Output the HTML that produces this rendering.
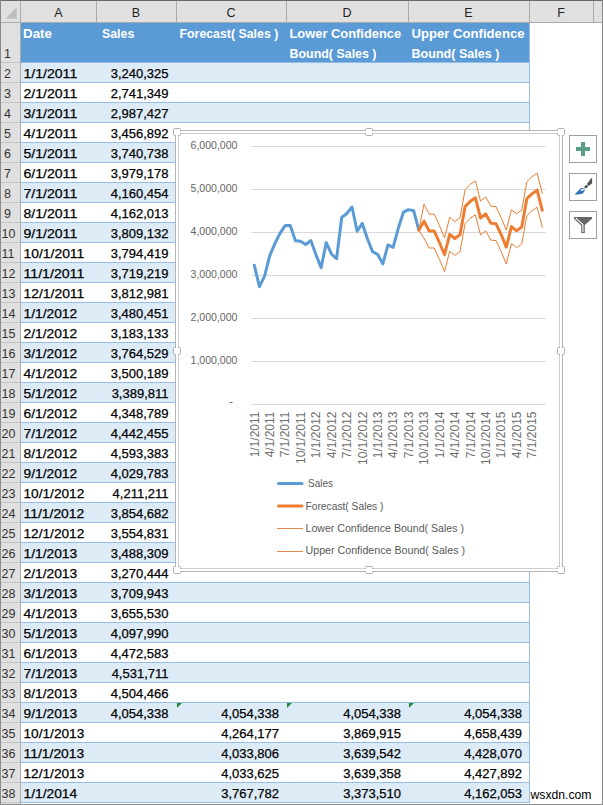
<!DOCTYPE html><html><head><meta charset="utf-8"><style>
*{margin:0;padding:0;box-sizing:border-box}
html,body{width:603px;height:805px;overflow:hidden;background:#fff}
body{position:relative;font-family:"Liberation Sans",sans-serif}
svg{position:absolute;left:0;top:0}

</style></head><body>
<svg width="603" height="805" font-family="Liberation Sans"><rect x="0" y="0" width="603" height="22" fill="#e0e0e0" shape-rendering="crispEdges"/><rect x="0" y="0" width="20" height="805" fill="#e0e0e0" shape-rendering="crispEdges"/><rect x="0" y="22" width="603" height="1" fill="#ababab" shape-rendering="crispEdges"/><rect x="20" y="0" width="1" height="805" fill="#ababab" shape-rendering="crispEdges"/><polygon points="5.5,18.7 16.7,18.7 16.7,7.5" fill="#bdbdbd"/><rect x="96" y="1" width="1" height="21" fill="#ababab" shape-rendering="crispEdges"/><rect x="176" y="1" width="1" height="21" fill="#ababab" shape-rendering="crispEdges"/><rect x="286" y="1" width="1" height="21" fill="#ababab" shape-rendering="crispEdges"/><rect x="408" y="1" width="1" height="21" fill="#ababab" shape-rendering="crispEdges"/><rect x="529" y="1" width="1" height="21" fill="#ababab" shape-rendering="crispEdges"/><rect x="593" y="1" width="1" height="21" fill="#ababab" shape-rendering="crispEdges"/><text x="58.5" y="17" font-size="12.5" fill="#222" text-anchor="middle" >A</text><text x="136.0" y="17" font-size="12.5" fill="#222" text-anchor="middle" >B</text><text x="231.0" y="17" font-size="12.5" fill="#222" text-anchor="middle" >C</text><text x="347.0" y="17" font-size="12.5" fill="#222" text-anchor="middle" >D</text><text x="468.5" y="17" font-size="12.5" fill="#222" text-anchor="middle" >E</text><text x="561.0" y="17" font-size="12.5" fill="#222" text-anchor="middle" >F</text><rect x="1" y="62" width="19" height="1" fill="#c4c4c4" shape-rendering="crispEdges"/><text x="4" y="58" font-size="12.5" fill="#333" >1</text><rect x="1" y="82" width="19" height="1" fill="#c4c4c4" shape-rendering="crispEdges"/><text x="4" y="78" font-size="12.5" fill="#333" >2</text><rect x="1" y="102" width="19" height="1" fill="#c4c4c4" shape-rendering="crispEdges"/><text x="4" y="98" font-size="12.5" fill="#333" >3</text><rect x="1" y="122" width="19" height="1" fill="#c4c4c4" shape-rendering="crispEdges"/><text x="4" y="118" font-size="12.5" fill="#333" >4</text><rect x="1" y="142" width="19" height="1" fill="#c4c4c4" shape-rendering="crispEdges"/><text x="4" y="138" font-size="12.5" fill="#333" >5</text><rect x="1" y="162" width="19" height="1" fill="#c4c4c4" shape-rendering="crispEdges"/><text x="4" y="158" font-size="12.5" fill="#333" >6</text><rect x="1" y="182" width="19" height="1" fill="#c4c4c4" shape-rendering="crispEdges"/><text x="4" y="178" font-size="12.5" fill="#333" >7</text><rect x="1" y="202" width="19" height="1" fill="#c4c4c4" shape-rendering="crispEdges"/><text x="4" y="198" font-size="12.5" fill="#333" >8</text><rect x="1" y="222" width="19" height="1" fill="#c4c4c4" shape-rendering="crispEdges"/><text x="4" y="218" font-size="12.5" fill="#333" >9</text><rect x="1" y="242" width="19" height="1" fill="#c4c4c4" shape-rendering="crispEdges"/><text x="1.5" y="238" font-size="12.5" fill="#333" >10</text><rect x="1" y="262" width="19" height="1" fill="#c4c4c4" shape-rendering="crispEdges"/><text x="1.5" y="258" font-size="12.5" fill="#333" >11</text><rect x="1" y="282" width="19" height="1" fill="#c4c4c4" shape-rendering="crispEdges"/><text x="1.5" y="278" font-size="12.5" fill="#333" >12</text><rect x="1" y="302" width="19" height="1" fill="#c4c4c4" shape-rendering="crispEdges"/><text x="1.5" y="298" font-size="12.5" fill="#333" >13</text><rect x="1" y="322" width="19" height="1" fill="#c4c4c4" shape-rendering="crispEdges"/><text x="1.5" y="318" font-size="12.5" fill="#333" >14</text><rect x="1" y="342" width="19" height="1" fill="#c4c4c4" shape-rendering="crispEdges"/><text x="1.5" y="338" font-size="12.5" fill="#333" >15</text><rect x="1" y="362" width="19" height="1" fill="#c4c4c4" shape-rendering="crispEdges"/><text x="1.5" y="358" font-size="12.5" fill="#333" >16</text><rect x="1" y="382" width="19" height="1" fill="#c4c4c4" shape-rendering="crispEdges"/><text x="1.5" y="378" font-size="12.5" fill="#333" >17</text><rect x="1" y="402" width="19" height="1" fill="#c4c4c4" shape-rendering="crispEdges"/><text x="1.5" y="398" font-size="12.5" fill="#333" >18</text><rect x="1" y="422" width="19" height="1" fill="#c4c4c4" shape-rendering="crispEdges"/><text x="1.5" y="418" font-size="12.5" fill="#333" >19</text><rect x="1" y="442" width="19" height="1" fill="#c4c4c4" shape-rendering="crispEdges"/><text x="1.5" y="438" font-size="12.5" fill="#333" >20</text><rect x="1" y="462" width="19" height="1" fill="#c4c4c4" shape-rendering="crispEdges"/><text x="1.5" y="458" font-size="12.5" fill="#333" >21</text><rect x="1" y="482" width="19" height="1" fill="#c4c4c4" shape-rendering="crispEdges"/><text x="1.5" y="478" font-size="12.5" fill="#333" >22</text><rect x="1" y="502" width="19" height="1" fill="#c4c4c4" shape-rendering="crispEdges"/><text x="1.5" y="498" font-size="12.5" fill="#333" >23</text><rect x="1" y="522" width="19" height="1" fill="#c4c4c4" shape-rendering="crispEdges"/><text x="1.5" y="518" font-size="12.5" fill="#333" >24</text><rect x="1" y="542" width="19" height="1" fill="#c4c4c4" shape-rendering="crispEdges"/><text x="1.5" y="538" font-size="12.5" fill="#333" >25</text><rect x="1" y="562" width="19" height="1" fill="#c4c4c4" shape-rendering="crispEdges"/><text x="1.5" y="558" font-size="12.5" fill="#333" >26</text><rect x="1" y="582" width="19" height="1" fill="#c4c4c4" shape-rendering="crispEdges"/><text x="1.5" y="578" font-size="12.5" fill="#333" >27</text><rect x="1" y="602" width="19" height="1" fill="#c4c4c4" shape-rendering="crispEdges"/><text x="1.5" y="598" font-size="12.5" fill="#333" >28</text><rect x="1" y="622" width="19" height="1" fill="#c4c4c4" shape-rendering="crispEdges"/><text x="1.5" y="618" font-size="12.5" fill="#333" >29</text><rect x="1" y="642" width="19" height="1" fill="#c4c4c4" shape-rendering="crispEdges"/><text x="1.5" y="638" font-size="12.5" fill="#333" >30</text><rect x="1" y="662" width="19" height="1" fill="#c4c4c4" shape-rendering="crispEdges"/><text x="1.5" y="658" font-size="12.5" fill="#333" >31</text><rect x="1" y="682" width="19" height="1" fill="#c4c4c4" shape-rendering="crispEdges"/><text x="1.5" y="678" font-size="12.5" fill="#333" >32</text><rect x="1" y="702" width="19" height="1" fill="#c4c4c4" shape-rendering="crispEdges"/><text x="1.5" y="698" font-size="12.5" fill="#333" >33</text><rect x="1" y="722" width="19" height="1" fill="#c4c4c4" shape-rendering="crispEdges"/><text x="1.5" y="718" font-size="12.5" fill="#333" >34</text><rect x="1" y="742" width="19" height="1" fill="#c4c4c4" shape-rendering="crispEdges"/><text x="1.5" y="738" font-size="12.5" fill="#333" >35</text><rect x="1" y="762" width="19" height="1" fill="#c4c4c4" shape-rendering="crispEdges"/><text x="1.5" y="758" font-size="12.5" fill="#333" >36</text><rect x="1" y="782" width="19" height="1" fill="#c4c4c4" shape-rendering="crispEdges"/><text x="1.5" y="778" font-size="12.5" fill="#333" >37</text><rect x="1" y="802" width="19" height="1" fill="#c4c4c4" shape-rendering="crispEdges"/><text x="1.5" y="798" font-size="12.5" fill="#333" >38</text><rect x="21" y="23" width="508" height="39" fill="#5b9bd5" shape-rendering="crispEdges"/><rect x="21" y="62" width="508" height="1" fill="#98bde4" shape-rendering="crispEdges"/><rect x="21" y="63" width="508" height="19" fill="#ddebf7" shape-rendering="crispEdges"/><rect x="21" y="82" width="508" height="1" fill="#98bde4" shape-rendering="crispEdges"/><rect x="21" y="83" width="508" height="19" fill="#ffffff" shape-rendering="crispEdges"/><rect x="21" y="102" width="508" height="1" fill="#98bde4" shape-rendering="crispEdges"/><rect x="21" y="103" width="508" height="19" fill="#ddebf7" shape-rendering="crispEdges"/><rect x="21" y="122" width="508" height="1" fill="#98bde4" shape-rendering="crispEdges"/><rect x="21" y="123" width="508" height="19" fill="#ffffff" shape-rendering="crispEdges"/><rect x="21" y="142" width="508" height="1" fill="#98bde4" shape-rendering="crispEdges"/><rect x="21" y="143" width="508" height="19" fill="#ddebf7" shape-rendering="crispEdges"/><rect x="21" y="162" width="508" height="1" fill="#98bde4" shape-rendering="crispEdges"/><rect x="21" y="163" width="508" height="19" fill="#ffffff" shape-rendering="crispEdges"/><rect x="21" y="182" width="508" height="1" fill="#98bde4" shape-rendering="crispEdges"/><rect x="21" y="183" width="508" height="19" fill="#ddebf7" shape-rendering="crispEdges"/><rect x="21" y="202" width="508" height="1" fill="#98bde4" shape-rendering="crispEdges"/><rect x="21" y="203" width="508" height="19" fill="#ffffff" shape-rendering="crispEdges"/><rect x="21" y="222" width="508" height="1" fill="#98bde4" shape-rendering="crispEdges"/><rect x="21" y="223" width="508" height="19" fill="#ddebf7" shape-rendering="crispEdges"/><rect x="21" y="242" width="508" height="1" fill="#98bde4" shape-rendering="crispEdges"/><rect x="21" y="243" width="508" height="19" fill="#ffffff" shape-rendering="crispEdges"/><rect x="21" y="262" width="508" height="1" fill="#98bde4" shape-rendering="crispEdges"/><rect x="21" y="263" width="508" height="19" fill="#ddebf7" shape-rendering="crispEdges"/><rect x="21" y="282" width="508" height="1" fill="#98bde4" shape-rendering="crispEdges"/><rect x="21" y="283" width="508" height="19" fill="#ffffff" shape-rendering="crispEdges"/><rect x="21" y="302" width="508" height="1" fill="#98bde4" shape-rendering="crispEdges"/><rect x="21" y="303" width="508" height="19" fill="#ddebf7" shape-rendering="crispEdges"/><rect x="21" y="322" width="508" height="1" fill="#98bde4" shape-rendering="crispEdges"/><rect x="21" y="323" width="508" height="19" fill="#ffffff" shape-rendering="crispEdges"/><rect x="21" y="342" width="508" height="1" fill="#98bde4" shape-rendering="crispEdges"/><rect x="21" y="343" width="508" height="19" fill="#ddebf7" shape-rendering="crispEdges"/><rect x="21" y="362" width="508" height="1" fill="#98bde4" shape-rendering="crispEdges"/><rect x="21" y="363" width="508" height="19" fill="#ffffff" shape-rendering="crispEdges"/><rect x="21" y="382" width="508" height="1" fill="#98bde4" shape-rendering="crispEdges"/><rect x="21" y="383" width="508" height="19" fill="#ddebf7" shape-rendering="crispEdges"/><rect x="21" y="402" width="508" height="1" fill="#98bde4" shape-rendering="crispEdges"/><rect x="21" y="403" width="508" height="19" fill="#ffffff" shape-rendering="crispEdges"/><rect x="21" y="422" width="508" height="1" fill="#98bde4" shape-rendering="crispEdges"/><rect x="21" y="423" width="508" height="19" fill="#ddebf7" shape-rendering="crispEdges"/><rect x="21" y="442" width="508" height="1" fill="#98bde4" shape-rendering="crispEdges"/><rect x="21" y="443" width="508" height="19" fill="#ffffff" shape-rendering="crispEdges"/><rect x="21" y="462" width="508" height="1" fill="#98bde4" shape-rendering="crispEdges"/><rect x="21" y="463" width="508" height="19" fill="#ddebf7" shape-rendering="crispEdges"/><rect x="21" y="482" width="508" height="1" fill="#98bde4" shape-rendering="crispEdges"/><rect x="21" y="483" width="508" height="19" fill="#ffffff" shape-rendering="crispEdges"/><rect x="21" y="502" width="508" height="1" fill="#98bde4" shape-rendering="crispEdges"/><rect x="21" y="503" width="508" height="19" fill="#ddebf7" shape-rendering="crispEdges"/><rect x="21" y="522" width="508" height="1" fill="#98bde4" shape-rendering="crispEdges"/><rect x="21" y="523" width="508" height="19" fill="#ffffff" shape-rendering="crispEdges"/><rect x="21" y="542" width="508" height="1" fill="#98bde4" shape-rendering="crispEdges"/><rect x="21" y="543" width="508" height="19" fill="#ddebf7" shape-rendering="crispEdges"/><rect x="21" y="562" width="508" height="1" fill="#98bde4" shape-rendering="crispEdges"/><rect x="21" y="563" width="508" height="19" fill="#ffffff" shape-rendering="crispEdges"/><rect x="21" y="582" width="508" height="1" fill="#98bde4" shape-rendering="crispEdges"/><rect x="21" y="583" width="508" height="19" fill="#ddebf7" shape-rendering="crispEdges"/><rect x="21" y="602" width="508" height="1" fill="#98bde4" shape-rendering="crispEdges"/><rect x="21" y="603" width="508" height="19" fill="#ffffff" shape-rendering="crispEdges"/><rect x="21" y="622" width="508" height="1" fill="#98bde4" shape-rendering="crispEdges"/><rect x="21" y="623" width="508" height="19" fill="#ddebf7" shape-rendering="crispEdges"/><rect x="21" y="642" width="508" height="1" fill="#98bde4" shape-rendering="crispEdges"/><rect x="21" y="643" width="508" height="19" fill="#ffffff" shape-rendering="crispEdges"/><rect x="21" y="662" width="508" height="1" fill="#98bde4" shape-rendering="crispEdges"/><rect x="21" y="663" width="508" height="19" fill="#ddebf7" shape-rendering="crispEdges"/><rect x="21" y="682" width="508" height="1" fill="#98bde4" shape-rendering="crispEdges"/><rect x="21" y="683" width="508" height="19" fill="#ffffff" shape-rendering="crispEdges"/><rect x="21" y="702" width="508" height="1" fill="#98bde4" shape-rendering="crispEdges"/><rect x="21" y="703" width="508" height="19" fill="#ddebf7" shape-rendering="crispEdges"/><rect x="21" y="722" width="508" height="1" fill="#98bde4" shape-rendering="crispEdges"/><rect x="21" y="723" width="508" height="19" fill="#ffffff" shape-rendering="crispEdges"/><rect x="21" y="742" width="508" height="1" fill="#98bde4" shape-rendering="crispEdges"/><rect x="21" y="743" width="508" height="19" fill="#ddebf7" shape-rendering="crispEdges"/><rect x="21" y="762" width="508" height="1" fill="#98bde4" shape-rendering="crispEdges"/><rect x="21" y="763" width="508" height="19" fill="#ffffff" shape-rendering="crispEdges"/><rect x="21" y="782" width="508" height="1" fill="#98bde4" shape-rendering="crispEdges"/><rect x="21" y="783" width="508" height="19" fill="#ddebf7" shape-rendering="crispEdges"/><rect x="21" y="802" width="508" height="1" fill="#98bde4" shape-rendering="crispEdges"/><rect x="529" y="23" width="1" height="780" fill="#98bde4" shape-rendering="crispEdges"/><text x="23" y="38" font-size="13" fill="#fff" font-weight="bold" textLength="29" lengthAdjust="spacingAndGlyphs">Date</text><text x="102" y="38" font-size="13" fill="#fff" font-weight="bold" textLength="32.3" lengthAdjust="spacingAndGlyphs">Sales</text><text x="179.5" y="38" font-size="13" fill="#fff" font-weight="bold" textLength="98.8" lengthAdjust="spacingAndGlyphs">Forecast( Sales )</text><text x="289.5" y="38" font-size="13" fill="#fff" font-weight="bold" textLength="111.6" lengthAdjust="spacingAndGlyphs">Lower Confidence</text><text x="411.5" y="38" font-size="13" fill="#fff" font-weight="bold" textLength="113" lengthAdjust="spacingAndGlyphs">Upper Confidence</text><text x="289.5" y="58" font-size="13" fill="#fff" font-weight="bold" textLength="87" lengthAdjust="spacingAndGlyphs">Bound( Sales )</text><text x="411.5" y="58" font-size="13" fill="#fff" font-weight="bold" textLength="88" lengthAdjust="spacingAndGlyphs">Bound( Sales )</text><text x="23.5" y="78" font-size="13" fill="#000" textLength="53.7" lengthAdjust="spacingAndGlyphs" stroke="#000" stroke-width="0.25">1/1/2011</text><text x="168.5" y="78" font-size="13" fill="#000" text-anchor="end" stroke="#000" stroke-width="0.25">3,240,325</text><text x="23.5" y="98" font-size="13" fill="#000" textLength="53.7" lengthAdjust="spacingAndGlyphs" stroke="#000" stroke-width="0.25">2/1/2011</text><text x="168.5" y="98" font-size="13" fill="#000" text-anchor="end" stroke="#000" stroke-width="0.25">2,741,349</text><text x="23.5" y="118" font-size="13" fill="#000" textLength="53.7" lengthAdjust="spacingAndGlyphs" stroke="#000" stroke-width="0.25">3/1/2011</text><text x="168.5" y="118" font-size="13" fill="#000" text-anchor="end" stroke="#000" stroke-width="0.25">2,987,427</text><text x="23.5" y="138" font-size="13" fill="#000" textLength="53.7" lengthAdjust="spacingAndGlyphs" stroke="#000" stroke-width="0.25">4/1/2011</text><text x="168.5" y="138" font-size="13" fill="#000" text-anchor="end" stroke="#000" stroke-width="0.25">3,456,892</text><text x="23.5" y="158" font-size="13" fill="#000" textLength="53.7" lengthAdjust="spacingAndGlyphs" stroke="#000" stroke-width="0.25">5/1/2011</text><text x="168.5" y="158" font-size="13" fill="#000" text-anchor="end" stroke="#000" stroke-width="0.25">3,740,738</text><text x="23.5" y="178" font-size="13" fill="#000" textLength="53.7" lengthAdjust="spacingAndGlyphs" stroke="#000" stroke-width="0.25">6/1/2011</text><text x="168.5" y="178" font-size="13" fill="#000" text-anchor="end" stroke="#000" stroke-width="0.25">3,979,178</text><text x="23.5" y="198" font-size="13" fill="#000" textLength="53.7" lengthAdjust="spacingAndGlyphs" stroke="#000" stroke-width="0.25">7/1/2011</text><text x="168.5" y="198" font-size="13" fill="#000" text-anchor="end" stroke="#000" stroke-width="0.25">4,160,454</text><text x="23.5" y="218" font-size="13" fill="#000" textLength="53.7" lengthAdjust="spacingAndGlyphs" stroke="#000" stroke-width="0.25">8/1/2011</text><text x="168.5" y="218" font-size="13" fill="#000" text-anchor="end" stroke="#000" stroke-width="0.25">4,162,013</text><text x="23.5" y="238" font-size="13" fill="#000" textLength="53.7" lengthAdjust="spacingAndGlyphs" stroke="#000" stroke-width="0.25">9/1/2011</text><text x="168.5" y="238" font-size="13" fill="#000" text-anchor="end" stroke="#000" stroke-width="0.25">3,809,132</text><text x="23.5" y="258" font-size="13" fill="#000" textLength="60.8" lengthAdjust="spacingAndGlyphs" stroke="#000" stroke-width="0.25">10/1/2011</text><text x="168.5" y="258" font-size="13" fill="#000" text-anchor="end" stroke="#000" stroke-width="0.25">3,794,419</text><text x="23.5" y="278" font-size="13" fill="#000" textLength="60.8" lengthAdjust="spacingAndGlyphs" stroke="#000" stroke-width="0.25">11/1/2011</text><text x="168.5" y="278" font-size="13" fill="#000" text-anchor="end" stroke="#000" stroke-width="0.25">3,719,219</text><text x="23.5" y="298" font-size="13" fill="#000" textLength="60.8" lengthAdjust="spacingAndGlyphs" stroke="#000" stroke-width="0.25">12/1/2011</text><text x="168.5" y="298" font-size="13" fill="#000" text-anchor="end" stroke="#000" stroke-width="0.25">3,812,981</text><text x="23.5" y="318" font-size="13" fill="#000" textLength="53.7" lengthAdjust="spacingAndGlyphs" stroke="#000" stroke-width="0.25">1/1/2012</text><text x="168.5" y="318" font-size="13" fill="#000" text-anchor="end" stroke="#000" stroke-width="0.25">3,480,451</text><text x="23.5" y="338" font-size="13" fill="#000" textLength="53.7" lengthAdjust="spacingAndGlyphs" stroke="#000" stroke-width="0.25">2/1/2012</text><text x="168.5" y="338" font-size="13" fill="#000" text-anchor="end" stroke="#000" stroke-width="0.25">3,183,133</text><text x="23.5" y="358" font-size="13" fill="#000" textLength="53.7" lengthAdjust="spacingAndGlyphs" stroke="#000" stroke-width="0.25">3/1/2012</text><text x="168.5" y="358" font-size="13" fill="#000" text-anchor="end" stroke="#000" stroke-width="0.25">3,764,529</text><text x="23.5" y="378" font-size="13" fill="#000" textLength="53.7" lengthAdjust="spacingAndGlyphs" stroke="#000" stroke-width="0.25">4/1/2012</text><text x="168.5" y="378" font-size="13" fill="#000" text-anchor="end" stroke="#000" stroke-width="0.25">3,500,189</text><text x="23.5" y="398" font-size="13" fill="#000" textLength="53.7" lengthAdjust="spacingAndGlyphs" stroke="#000" stroke-width="0.25">5/1/2012</text><text x="168.5" y="398" font-size="13" fill="#000" text-anchor="end" stroke="#000" stroke-width="0.25">3,389,811</text><text x="23.5" y="418" font-size="13" fill="#000" textLength="53.7" lengthAdjust="spacingAndGlyphs" stroke="#000" stroke-width="0.25">6/1/2012</text><text x="168.5" y="418" font-size="13" fill="#000" text-anchor="end" stroke="#000" stroke-width="0.25">4,348,789</text><text x="23.5" y="438" font-size="13" fill="#000" textLength="53.7" lengthAdjust="spacingAndGlyphs" stroke="#000" stroke-width="0.25">7/1/2012</text><text x="168.5" y="438" font-size="13" fill="#000" text-anchor="end" stroke="#000" stroke-width="0.25">4,442,455</text><text x="23.5" y="458" font-size="13" fill="#000" textLength="53.7" lengthAdjust="spacingAndGlyphs" stroke="#000" stroke-width="0.25">8/1/2012</text><text x="168.5" y="458" font-size="13" fill="#000" text-anchor="end" stroke="#000" stroke-width="0.25">4,593,383</text><text x="23.5" y="478" font-size="13" fill="#000" textLength="53.7" lengthAdjust="spacingAndGlyphs" stroke="#000" stroke-width="0.25">9/1/2012</text><text x="168.5" y="478" font-size="13" fill="#000" text-anchor="end" stroke="#000" stroke-width="0.25">4,029,783</text><text x="23.5" y="498" font-size="13" fill="#000" textLength="60.8" lengthAdjust="spacingAndGlyphs" stroke="#000" stroke-width="0.25">10/1/2012</text><text x="168.5" y="498" font-size="13" fill="#000" text-anchor="end" stroke="#000" stroke-width="0.25">4,211,211</text><text x="23.5" y="518" font-size="13" fill="#000" textLength="60.8" lengthAdjust="spacingAndGlyphs" stroke="#000" stroke-width="0.25">11/1/2012</text><text x="168.5" y="518" font-size="13" fill="#000" text-anchor="end" stroke="#000" stroke-width="0.25">3,854,682</text><text x="23.5" y="538" font-size="13" fill="#000" textLength="60.8" lengthAdjust="spacingAndGlyphs" stroke="#000" stroke-width="0.25">12/1/2012</text><text x="168.5" y="538" font-size="13" fill="#000" text-anchor="end" stroke="#000" stroke-width="0.25">3,554,831</text><text x="23.5" y="558" font-size="13" fill="#000" textLength="53.7" lengthAdjust="spacingAndGlyphs" stroke="#000" stroke-width="0.25">1/1/2013</text><text x="168.5" y="558" font-size="13" fill="#000" text-anchor="end" stroke="#000" stroke-width="0.25">3,488,309</text><text x="23.5" y="578" font-size="13" fill="#000" textLength="53.7" lengthAdjust="spacingAndGlyphs" stroke="#000" stroke-width="0.25">2/1/2013</text><text x="168.5" y="578" font-size="13" fill="#000" text-anchor="end" stroke="#000" stroke-width="0.25">3,270,444</text><text x="23.5" y="598" font-size="13" fill="#000" textLength="53.7" lengthAdjust="spacingAndGlyphs" stroke="#000" stroke-width="0.25">3/1/2013</text><text x="168.5" y="598" font-size="13" fill="#000" text-anchor="end" stroke="#000" stroke-width="0.25">3,709,943</text><text x="23.5" y="618" font-size="13" fill="#000" textLength="53.7" lengthAdjust="spacingAndGlyphs" stroke="#000" stroke-width="0.25">4/1/2013</text><text x="168.5" y="618" font-size="13" fill="#000" text-anchor="end" stroke="#000" stroke-width="0.25">3,655,530</text><text x="23.5" y="638" font-size="13" fill="#000" textLength="53.7" lengthAdjust="spacingAndGlyphs" stroke="#000" stroke-width="0.25">5/1/2013</text><text x="168.5" y="638" font-size="13" fill="#000" text-anchor="end" stroke="#000" stroke-width="0.25">4,097,990</text><text x="23.5" y="658" font-size="13" fill="#000" textLength="53.7" lengthAdjust="spacingAndGlyphs" stroke="#000" stroke-width="0.25">6/1/2013</text><text x="168.5" y="658" font-size="13" fill="#000" text-anchor="end" stroke="#000" stroke-width="0.25">4,472,583</text><text x="23.5" y="678" font-size="13" fill="#000" textLength="53.7" lengthAdjust="spacingAndGlyphs" stroke="#000" stroke-width="0.25">7/1/2013</text><text x="168.5" y="678" font-size="13" fill="#000" text-anchor="end" stroke="#000" stroke-width="0.25">4,531,711</text><text x="23.5" y="698" font-size="13" fill="#000" textLength="53.7" lengthAdjust="spacingAndGlyphs" stroke="#000" stroke-width="0.25">8/1/2013</text><text x="168.5" y="698" font-size="13" fill="#000" text-anchor="end" stroke="#000" stroke-width="0.25">4,504,466</text><text x="23.5" y="718" font-size="13" fill="#000" textLength="53.7" lengthAdjust="spacingAndGlyphs" stroke="#000" stroke-width="0.25">9/1/2013</text><text x="168.5" y="718" font-size="13" fill="#000" text-anchor="end" stroke="#000" stroke-width="0.25">4,054,338</text><text x="279" y="718" font-size="13" fill="#000" text-anchor="end" stroke="#000" stroke-width="0.25">4,054,338</text><text x="401" y="718" font-size="13" fill="#000" text-anchor="end" stroke="#000" stroke-width="0.25">4,054,338</text><text x="522" y="718" font-size="13" fill="#000" text-anchor="end" stroke="#000" stroke-width="0.25">4,054,338</text><polygon points="177,703 182,703 177,708" fill="#1e8c3a"/><polygon points="287,703 292,703 287,708" fill="#1e8c3a"/><polygon points="409,703 414,703 409,708" fill="#1e8c3a"/><text x="23.5" y="738" font-size="13" fill="#000" textLength="60.8" lengthAdjust="spacingAndGlyphs" stroke="#000" stroke-width="0.25">10/1/2013</text><text x="279" y="738" font-size="13" fill="#000" text-anchor="end" stroke="#000" stroke-width="0.25">4,264,177</text><text x="401" y="738" font-size="13" fill="#000" text-anchor="end" stroke="#000" stroke-width="0.25">3,869,915</text><text x="522" y="738" font-size="13" fill="#000" text-anchor="end" stroke="#000" stroke-width="0.25">4,658,439</text><text x="23.5" y="758" font-size="13" fill="#000" textLength="60.8" lengthAdjust="spacingAndGlyphs" stroke="#000" stroke-width="0.25">11/1/2013</text><text x="279" y="758" font-size="13" fill="#000" text-anchor="end" stroke="#000" stroke-width="0.25">4,033,806</text><text x="401" y="758" font-size="13" fill="#000" text-anchor="end" stroke="#000" stroke-width="0.25">3,639,542</text><text x="522" y="758" font-size="13" fill="#000" text-anchor="end" stroke="#000" stroke-width="0.25">4,428,070</text><text x="23.5" y="778" font-size="13" fill="#000" textLength="60.8" lengthAdjust="spacingAndGlyphs" stroke="#000" stroke-width="0.25">12/1/2013</text><text x="279" y="778" font-size="13" fill="#000" text-anchor="end" stroke="#000" stroke-width="0.25">4,033,625</text><text x="401" y="778" font-size="13" fill="#000" text-anchor="end" stroke="#000" stroke-width="0.25">3,639,358</text><text x="522" y="778" font-size="13" fill="#000" text-anchor="end" stroke="#000" stroke-width="0.25">4,427,892</text><text x="23.5" y="798" font-size="13" fill="#000" textLength="53.7" lengthAdjust="spacingAndGlyphs" stroke="#000" stroke-width="0.25">1/1/2014</text><text x="279" y="798" font-size="13" fill="#000" text-anchor="end" stroke="#000" stroke-width="0.25">3,767,782</text><text x="401" y="798" font-size="13" fill="#000" text-anchor="end" stroke="#000" stroke-width="0.25">3,373,510</text><text x="522" y="798" font-size="13" fill="#000" text-anchor="end" stroke="#000" stroke-width="0.25">4,162,053</text><rect x="175.5" y="130.5" width="387" height="441" fill="#fff" stroke="#b4b4b4" stroke-width="1"/><rect x="178.5" y="133.5" width="381" height="435" fill="#fff" stroke="#cfcfcf" stroke-width="1"/><rect x="173.5" y="128.5" width="7" height="7" rx="1" fill="#fff" stroke="#b0b0b0" stroke-width="1"/><rect x="180" y="131" width="1" height="2" fill="#fff" shape-rendering="crispEdges"/><rect x="176" y="135" width="2" height="1" fill="#fff" shape-rendering="crispEdges"/><rect x="365.5" y="128.5" width="7" height="7" rx="1" fill="#fff" stroke="#b0b0b0" stroke-width="1"/><rect x="372" y="131" width="1" height="2" fill="#fff" shape-rendering="crispEdges"/><rect x="365" y="131" width="1" height="2" fill="#fff" shape-rendering="crispEdges"/><rect x="557.5" y="128.5" width="7" height="7" rx="1" fill="#fff" stroke="#b0b0b0" stroke-width="1"/><rect x="557" y="131" width="1" height="2" fill="#fff" shape-rendering="crispEdges"/><rect x="560" y="135" width="2" height="1" fill="#fff" shape-rendering="crispEdges"/><rect x="173.5" y="347.5" width="7" height="7" rx="1" fill="#fff" stroke="#b0b0b0" stroke-width="1"/><rect x="176" y="354" width="2" height="1" fill="#fff" shape-rendering="crispEdges"/><rect x="176" y="347" width="2" height="1" fill="#fff" shape-rendering="crispEdges"/><rect x="557.5" y="347.5" width="7" height="7" rx="1" fill="#fff" stroke="#b0b0b0" stroke-width="1"/><rect x="560" y="354" width="2" height="1" fill="#fff" shape-rendering="crispEdges"/><rect x="560" y="347" width="2" height="1" fill="#fff" shape-rendering="crispEdges"/><rect x="173.5" y="566.5" width="7" height="7" rx="1" fill="#fff" stroke="#b0b0b0" stroke-width="1"/><rect x="180" y="569" width="1" height="2" fill="#fff" shape-rendering="crispEdges"/><rect x="176" y="566" width="2" height="1" fill="#fff" shape-rendering="crispEdges"/><rect x="365.5" y="566.5" width="7" height="7" rx="1" fill="#fff" stroke="#b0b0b0" stroke-width="1"/><rect x="372" y="569" width="1" height="2" fill="#fff" shape-rendering="crispEdges"/><rect x="365" y="569" width="1" height="2" fill="#fff" shape-rendering="crispEdges"/><rect x="557.5" y="566.5" width="7" height="7" rx="1" fill="#fff" stroke="#b0b0b0" stroke-width="1"/><rect x="557" y="569" width="1" height="2" fill="#fff" shape-rendering="crispEdges"/><rect x="560" y="566" width="2" height="1" fill="#fff" shape-rendering="crispEdges"/><line x1="251.5" y1="404.5" x2="546" y2="404.5" stroke="#d9d9d9" stroke-width="1"/><text x="233" y="405.0" font-size="11" fill="#595959" text-anchor="end" >-</text><line x1="251.5" y1="361.5" x2="546" y2="361.5" stroke="#d9d9d9" stroke-width="1"/><text x="237.5" y="363.5" font-size="11" fill="#666666" text-anchor="end" textLength="47" lengthAdjust="spacingAndGlyphs">1,000,000</text><line x1="251.5" y1="318.5" x2="546" y2="318.5" stroke="#d9d9d9" stroke-width="1"/><text x="237.5" y="320.5" font-size="11" fill="#666666" text-anchor="end" textLength="47" lengthAdjust="spacingAndGlyphs">2,000,000</text><line x1="251.5" y1="275.5" x2="546" y2="275.5" stroke="#d9d9d9" stroke-width="1"/><text x="237.5" y="277.5" font-size="11" fill="#666666" text-anchor="end" textLength="47" lengthAdjust="spacingAndGlyphs">3,000,000</text><line x1="251.5" y1="232.5" x2="546" y2="232.5" stroke="#d9d9d9" stroke-width="1"/><text x="237.5" y="234.5" font-size="11" fill="#666666" text-anchor="end" textLength="47" lengthAdjust="spacingAndGlyphs">4,000,000</text><line x1="251.5" y1="189.5" x2="546" y2="189.5" stroke="#d9d9d9" stroke-width="1"/><text x="237.5" y="191.5" font-size="11" fill="#666666" text-anchor="end" textLength="47" lengthAdjust="spacingAndGlyphs">5,000,000</text><line x1="251.5" y1="146.5" x2="546" y2="146.5" stroke="#d9d9d9" stroke-width="1"/><text x="237.5" y="148.5" font-size="11" fill="#666666" text-anchor="end" textLength="47" lengthAdjust="spacingAndGlyphs">6,000,000</text><polyline points="254.27,265.17 259.41,286.62 264.56,276.04 269.70,255.85 274.84,243.65 279.99,233.40 285.13,225.60 290.27,225.53 295.42,240.71 300.56,241.34 305.70,244.57 310.84,240.54 315.99,254.84 321.13,267.63 326.27,242.63 331.42,253.99 336.56,258.74 341.70,217.50 346.85,213.47 351.99,206.98 357.13,231.22 362.27,223.42 367.42,238.75 372.56,251.64 377.70,254.50 382.85,263.87 387.99,244.97 393.13,247.31 398.28,228.29 403.42,212.18 408.56,209.64 413.70,210.81 418.85,230.16" fill="none" stroke="#5b9bd5" stroke-width="3" stroke-linejoin="round" stroke-linecap="round"/><polyline points="418.85,230.16 423.99,238.09 429.13,248.00 434.28,248.01 439.42,259.44 444.56,271.68 449.71,251.25 454.85,255.43 459.99,251.72 465.13,223.39 470.28,218.28 475.42,214.80 480.56,235.00 485.71,230.82 490.85,240.11 495.99,240.57 501.14,251.48 506.28,264.02 511.42,243.59 516.56,247.77 521.71,244.05 526.85,215.73 531.99,210.62 537.14,207.14 542.28,227.34" fill="none" stroke="#ed7d31" stroke-width="1" stroke-linejoin="round" stroke-linecap="round"/><polyline points="418.85,230.16 423.99,204.19 429.13,214.09 434.28,214.10 439.42,225.53 444.56,237.78 449.71,217.34 454.85,221.52 459.99,217.81 465.13,189.48 470.28,184.37 475.42,180.89 480.56,201.09 485.71,196.91 490.85,206.20 495.99,206.66 501.14,217.58 506.28,230.11 511.42,209.68 516.56,213.86 521.71,210.15 526.85,181.82 531.99,176.71 537.14,173.23 542.28,193.43" fill="none" stroke="#ed7d31" stroke-width="1" stroke-linejoin="round" stroke-linecap="round"/><polyline points="418.85,230.16 423.99,221.14 429.13,231.05 434.28,231.05 439.42,242.49 444.56,254.73 449.71,234.30 454.85,238.48 459.99,234.76 465.13,206.44 470.28,201.33 475.42,197.85 480.56,218.05 485.71,213.87 490.85,223.15 495.99,223.62 501.14,234.53 506.28,247.07 511.42,226.64 516.56,230.81 521.71,227.10 526.85,198.77 531.99,193.67 537.14,190.18 542.28,210.38" fill="none" stroke="#ed7d31" stroke-width="3" stroke-linejoin="round" stroke-linecap="round"/><text transform="translate(258.57,411.5) rotate(-90)" text-anchor="end" font-size="12" fill="#6e6e6e">1/1/2011</text><text transform="translate(274.00,411.5) rotate(-90)" text-anchor="end" font-size="12" fill="#6e6e6e">4/1/2011</text><text transform="translate(289.43,411.5) rotate(-90)" text-anchor="end" font-size="12" fill="#6e6e6e">7/1/2011</text><text transform="translate(304.86,411.5) rotate(-90)" text-anchor="end" font-size="12" fill="#6e6e6e">10/1/2011</text><text transform="translate(320.29,411.5) rotate(-90)" text-anchor="end" font-size="12" fill="#6e6e6e">1/1/2012</text><text transform="translate(335.72,411.5) rotate(-90)" text-anchor="end" font-size="12" fill="#6e6e6e">4/1/2012</text><text transform="translate(351.15,411.5) rotate(-90)" text-anchor="end" font-size="12" fill="#6e6e6e">7/1/2012</text><text transform="translate(366.57,411.5) rotate(-90)" text-anchor="end" font-size="12" fill="#6e6e6e">10/1/2012</text><text transform="translate(382.00,411.5) rotate(-90)" text-anchor="end" font-size="12" fill="#6e6e6e">1/1/2013</text><text transform="translate(397.43,411.5) rotate(-90)" text-anchor="end" font-size="12" fill="#6e6e6e">4/1/2013</text><text transform="translate(412.86,411.5) rotate(-90)" text-anchor="end" font-size="12" fill="#6e6e6e">7/1/2013</text><text transform="translate(428.29,411.5) rotate(-90)" text-anchor="end" font-size="12" fill="#6e6e6e">10/1/2013</text><text transform="translate(443.72,411.5) rotate(-90)" text-anchor="end" font-size="12" fill="#6e6e6e">1/1/2014</text><text transform="translate(459.15,411.5) rotate(-90)" text-anchor="end" font-size="12" fill="#6e6e6e">4/1/2014</text><text transform="translate(474.58,411.5) rotate(-90)" text-anchor="end" font-size="12" fill="#6e6e6e">7/1/2014</text><text transform="translate(490.01,411.5) rotate(-90)" text-anchor="end" font-size="12" fill="#6e6e6e">10/1/2014</text><text transform="translate(505.44,411.5) rotate(-90)" text-anchor="end" font-size="12" fill="#6e6e6e">1/1/2015</text><text transform="translate(520.86,411.5) rotate(-90)" text-anchor="end" font-size="12" fill="#6e6e6e">4/1/2015</text><text transform="translate(536.29,411.5) rotate(-90)" text-anchor="end" font-size="12" fill="#6e6e6e">7/1/2015</text><line x1="278.5" y1="483.5" x2="302" y2="483.5" stroke="#5b9bd5" stroke-width="3" stroke-linecap="round"/><text x="308" y="487" font-size="11" fill="#595959" textLength="25" lengthAdjust="spacingAndGlyphs">Sales</text><line x1="278.5" y1="506" x2="302" y2="506" stroke="#ed7d31" stroke-width="3" stroke-linecap="round"/><text x="305.5" y="509.5" font-size="11" fill="#595959" textLength="78" lengthAdjust="spacingAndGlyphs">Forecast( Sales )</text><line x1="277" y1="528.5" x2="303" y2="528.5" stroke="#e08a4c" stroke-width="1"/><text x="305.5" y="532" font-size="11" fill="#595959" textLength="158.5" lengthAdjust="spacingAndGlyphs">Lower Confidence Bound( Sales )</text><line x1="277" y1="551.5" x2="303" y2="551.5" stroke="#e08a4c" stroke-width="1"/><text x="305.5" y="553.8" font-size="11" fill="#595959" textLength="159.5" lengthAdjust="spacingAndGlyphs">Upper Confidence Bound( Sales )</text><rect x="569.5" y="135.5" width="27" height="27" fill="#fff" stroke="#a0a0a0" stroke-width="1"/><rect x="569.5" y="173.5" width="27" height="27" fill="#fff" stroke="#a0a0a0" stroke-width="1"/><rect x="569.5" y="211.5" width="27" height="27" fill="#fff" stroke="#a0a0a0" stroke-width="1"/><rect x="581" y="142" width="4" height="14" fill="#5a9e85"/><rect x="576" y="147" width="14" height="4" fill="#5a9e85"/><g transform="translate(569,173)"><path d="M22.3,4.9 L23.1,5.6 L23.1,10.5 L19.5,13 L17.9,10.9 Z" fill="#555"/><path d="M17.3,11.7 L19.3,13.4 L16.8,15.7 L15,13.9 Z" fill="#555"/><path d="M5.6,21.6 C7,19.8 8,18.8 9.3,17.7 C10.5,16.4 11.2,15.5 12,15.2 C13.2,14.7 14.6,14.8 15.5,15.9 C16,16.8 15.7,18.2 15,18.9 C14.2,19.9 13.3,20.6 11.8,21 C9.5,21.5 7.5,21.5 5.6,21.6 Z" fill="#3471bb"/><ellipse cx="13.3" cy="16.9" rx="1.7" ry="1.0" transform="rotate(-20 13.3 16.9)" fill="#f0f5fb"/></g><g transform="translate(569,211)"><path d="M4.9,6 L23,6 L23,7.7 L15.8,14 L15.8,21.9 L12.2,21.9 L12.2,14.4 L4.9,7.7 Z" fill="#666"/><path d="M6.6,6.9 L13.9,13.6 L13.9,20.9" fill="none" stroke="#fff" stroke-width="1.1"/></g><rect x="0" y="0" width="603" height="1" fill="#6a6a6a" shape-rendering="crispEdges"/><rect x="0" y="0" width="1" height="805" fill="#8a8a8a" shape-rendering="crispEdges"/><rect x="602" y="0" width="1" height="805" fill="#8a8a8a" shape-rendering="crispEdges"/><rect x="0" y="804" width="603" height="1" fill="#8a8a8a" shape-rendering="crispEdges"/><rect x="530" y="783" width="72" height="21" fill="#ffffff" shape-rendering="crispEdges"/><text x="530.5" y="799" font-size="13.5" fill="#000" textLength="61" lengthAdjust="spacingAndGlyphs">wsxdn.com</text></svg>
</body></html>
